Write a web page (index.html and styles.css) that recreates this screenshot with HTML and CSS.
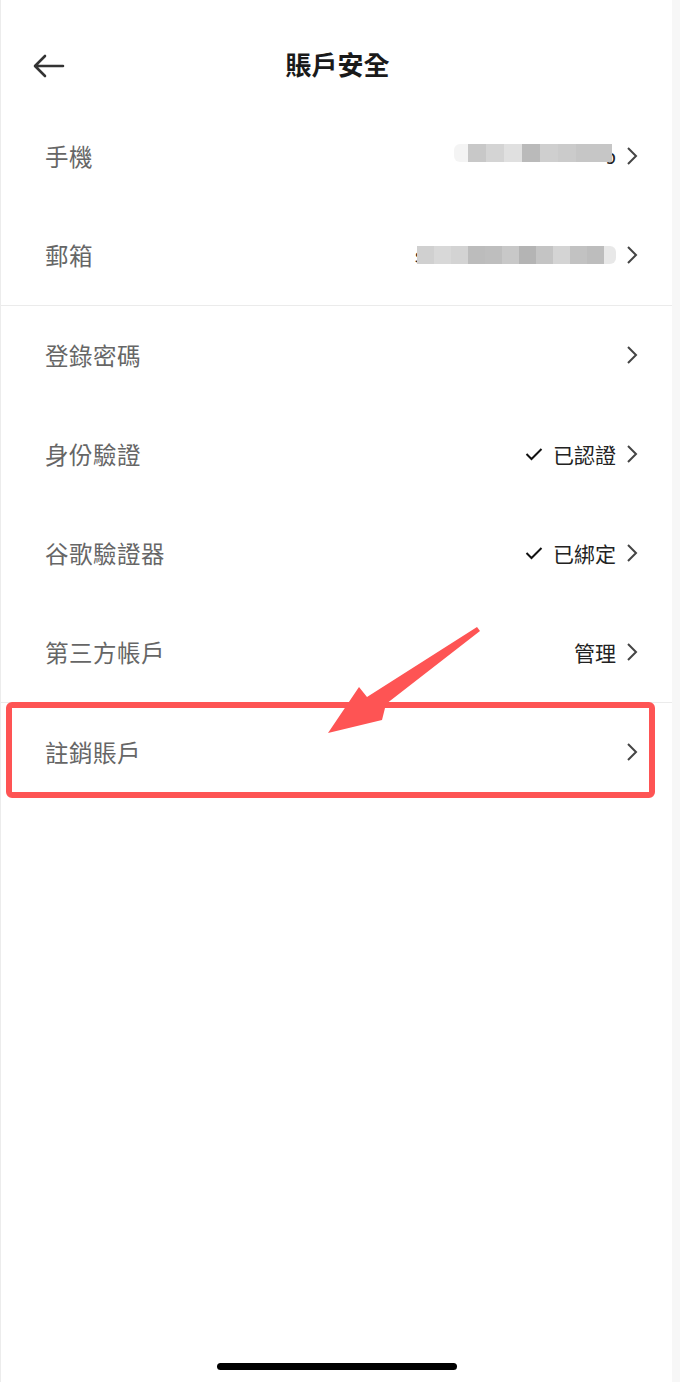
FILE: index.html
```html
<!DOCTYPE html>
<html lang="zh-Hant">

<head>
    <meta charset="UTF-8">
    <title>賬戶安全</title>
    <link rel="stylesheet" href="styles.css">
</head>

<body>
    <div class="page">
        <div class="header">
            <svg class="back" width="32" height="24" viewBox="0 0 32 24">
                <path d="M30 12 H3 M12 2 L2 12 L12 22" fill="none" stroke="#333" stroke-width="2.6" stroke-linecap="round" stroke-linejoin="round"/>
            </svg>
            <h1 class="title">賬戶安全</h1>
        </div>

        <div class="group">
            <div class="row">
                <span class="label">手機</span>
                <span class="value">
                    <span class="blur blur-phone"></span><span class="peek peek-end">ɔ</span>
                    <svg class="chevron" width="12" height="20" viewBox="0 0 12 20"><path d="M2 2 L10 10 L2 18" fill="none" stroke="#444" stroke-width="2"/></svg>
                </span>
            </div>
            <div class="row">
                <span class="label">郵箱</span>
                <span class="value">
                    <span class="peek">s</span><span class="blur blur-mail"></span>
                    <svg class="chevron" width="12" height="20" viewBox="0 0 12 20"><path d="M2 2 L10 10 L2 18" fill="none" stroke="#444" stroke-width="2"/></svg>
                </span>
            </div>
        </div>

        <div class="group">
            <div class="row">
                <span class="label">登錄密碼</span>
                <span class="value">
                    <svg class="chevron" width="12" height="20" viewBox="0 0 12 20"><path d="M2 2 L10 10 L2 18" fill="none" stroke="#444" stroke-width="2"/></svg>
                </span>
            </div>
            <div class="row">
                <span class="label">身份驗證</span>
                <span class="value">
                    <svg class="check" width="18" height="14" viewBox="0 0 18 14"><path d="M1.5 7 L6.5 12 L16.5 2" fill="none" stroke="#111" stroke-width="2"/></svg>
                    <span class="status">已認證</span>
                    <svg class="chevron" width="12" height="20" viewBox="0 0 12 20"><path d="M2 2 L10 10 L2 18" fill="none" stroke="#444" stroke-width="2"/></svg>
                </span>
            </div>
            <div class="row">
                <span class="label">谷歌驗證器</span>
                <span class="value">
                    <svg class="check" width="18" height="14" viewBox="0 0 18 14"><path d="M1.5 7 L6.5 12 L16.5 2" fill="none" stroke="#111" stroke-width="2"/></svg>
                    <span class="status">已綁定</span>
                    <svg class="chevron" width="12" height="20" viewBox="0 0 12 20"><path d="M2 2 L10 10 L2 18" fill="none" stroke="#444" stroke-width="2"/></svg>
                </span>
            </div>
            <div class="row">
                <span class="label">第三方帳戶</span>
                <span class="value">
                    <span class="status">管理</span>
                    <svg class="chevron" width="12" height="20" viewBox="0 0 12 20"><path d="M2 2 L10 10 L2 18" fill="none" stroke="#444" stroke-width="2"/></svg>
                </span>
            </div>
        </div>

        <div class="group">
            <div class="row">
                <span class="label">註銷賬戶</span>
                <span class="value">
                    <svg class="chevron" width="12" height="20" viewBox="0 0 12 20"><path d="M2 2 L10 10 L2 18" fill="none" stroke="#444" stroke-width="2"/></svg>
                </span>
            </div>
        </div>

        <div class="home-bar"></div>

        <!-- annotation drawn over the screenshot -->
        <svg class="markup" width="680" height="820" viewBox="0 0 680 820">
            <rect x="9" y="705" width="643" height="90" rx="3" fill="none" stroke="#fe5454" stroke-width="6"/>
            <polygon points="477,627 480,631 386,704 382,720 328,733 359,687 367,697" fill="#fe5454"/>
        </svg>
    </div>
</body>

</html>
```

FILE: styles.css
```css
html,
body {
    margin: 0;
    padding: 0;
    height: 100%;
}

body {
    background: #f7f7f7;
    font-family: "Noto Sans CJK TC", "Noto Sans", sans-serif;
}

.page {
    position: relative;
    width: 672px;
    min-height: 1382px;
    box-sizing: border-box;
    border-left: 1px solid #ececec;
    background: #fff;
    display: flex;
    flex-direction: column;
}

.header {
    position: relative;
    height: 107px;
    box-sizing: border-box;
    padding-top: 28px;
    display: flex;
    justify-content: center;
}

.back {
    position: absolute;
    left: 32px;
    top: 54px;
}

.title {
    margin: 0 0 0 2px;
    height: 72px;
    line-height: 72px;
    font-size: 26px;
    font-weight: 700;
    color: #1a1a1a;
}

.group + .group {
    border-top: 1px solid #ebebeb;
}

.row {
    height: 99px;
    box-sizing: border-box;
    padding: 0 34px 2px 44px;
    display: flex;
    align-items: center;
    justify-content: space-between;
}

.label {
    font-size: 23.5px;
    color: #666;
    letter-spacing: 0.5px;
}

.value {
    display: flex;
    align-items: center;
}

.status {
    font-size: 21px;
    color: #222;
    margin-left: 10px;
}

.check {
    margin-top: 1px;
}

.chevron {
    margin-left: 10px;
}

.blur {
    display: block;
    height: 18px;
    position: relative;
    z-index: 1;
}

.blur-phone {
    width: 158px;
    margin-top: -6px;
    margin-right: -6px;
    background: linear-gradient(to right,
        #f4f4f4 0 14px, #c8c8c8 14px 32px, #d4d4d4 32px 50px, #e0e0e0 50px 68px,
        #bababa 68px 86px, #cfcfcf 86px 104px, #cbcbcb 104px 122px, #c6c6c6 122px 158px);
    border-radius: 6px 0 0 6px;
}

.blur-mail {
    width: 199px;
    margin-left: -7px;
    background: linear-gradient(to right,
        #d0d0d0 0 17px, #d8d8d8 17px 34px, #d3d3d3 34px 51px, #bcbcbc 51px 68px,
        #bebebe 68px 85px, #c8c8c8 85px 102px, #b4b4b4 102px 119px, #c4c4c4 119px 136px,
        #d4d4d4 136px 153px, #c2c2c2 153px 170px, #bdbdbd 170px 187px, #e8e8e8 187px 199px);
    border-radius: 0 6px 6px 0;
}

.peek {
    font-size: 20px;
    color: #222;
    line-height: 20px;
}

.home-bar {
    width: 240px;
    height: 7px;
    border-radius: 4px;
    background: #000;
    margin: auto auto 12px;
}

.markup {
    position: absolute;
    left: -1px;
    top: 0;
    pointer-events: none;
}
```
